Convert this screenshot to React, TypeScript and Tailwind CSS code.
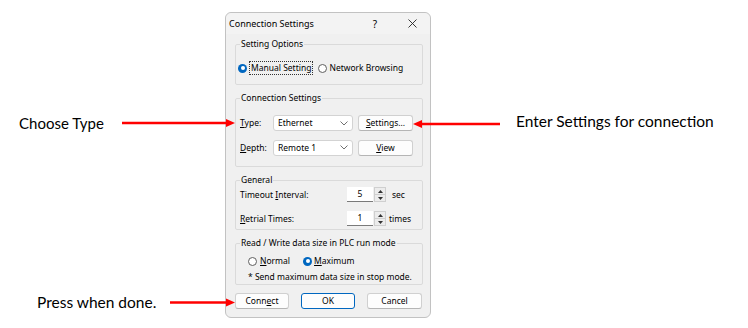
import React from "react";

const ui = "font-['Noto_Sans',sans-serif] text-[8.5px] leading-[12px] text-black";

function Radio({ on }: { on?: boolean }) {
  return on ? (
    <span className="w-[9px] h-[9px] rounded-full bg-[#0067c0] flex items-center justify-center shrink-0">
      <span className="w-[4px] h-[4px] rounded-full bg-white" />
    </span>
  ) : (
    <span className="block w-[9px] h-[9px] rounded-full border border-[#5f5f5f] bg-white shrink-0" />
  );
}

function Btn({ children, def, className = "" }: { children: React.ReactNode; def?: boolean; className?: string }) {
  return (
    <div
      className={`h-[16px] bg-[#fdfdfd] rounded-[3px] border flex items-center justify-center ${
        def ? "border-[#0067c0]" : "border-[#d0d0d0] border-b-[#b5b5b5]"
      } ${className}`}
    >
      {children}
    </div>
  );
}

function Select({ value }: { value: string }) {
  return (
    <div className="w-[80px] h-[16px] bg-white border border-[#d3d3d3] rounded-[3px] flex items-center justify-between pl-[4px] pr-[4px]">
      <span>{value}</span>
      <svg width="8" height="5" viewBox="0 0 8 5">
        <path d="M0.5 0.5 L4 4 L7.5 0.5" fill="none" stroke="#606060" strokeWidth="0.9" />
      </svg>
    </div>
  );
}

function Spin({ value }: { value: string }) {
  return (
    <div className="flex h-[15px]">
      <div className="w-[26px] bg-white border-b border-[#7a7a7a] flex items-center justify-center">{value}</div>
      <div className="w-[12px] ml-[1px] flex flex-col border border-[#cfcfcf] bg-[#ececec]">
        <div className="flex-1 flex items-center justify-center border-b border-[#cfcfcf]">
          <svg width="5" height="3" viewBox="0 0 5 3">
            <path d="M0 3 L2.5 0 L5 3 Z" fill="#333" />
          </svg>
        </div>
        <div className="flex-1 flex items-center justify-center">
          <svg width="5" height="3" viewBox="0 0 5 3">
            <path d="M0 0 L2.5 3 L5 0 Z" fill="#333" />
          </svg>
        </div>
      </div>
    </div>
  );
}

function Group({ title, className, children }: { title: string; className: string; children: React.ReactNode }) {
  return (
    <fieldset className={`border border-[#dadada] rounded-[2px] px-[4px] ${className}`}>
      <legend className="px-[1px] leading-[12px]">{title}</legend>
      {children}
    </fieldset>
  );
}

export default function App() {
  return (
    <div className="relative w-[748px] h-[328px] bg-white overflow-hidden">
      {/* Dialog */}
      <div className={`${ui} ml-[225px] mt-[12px] w-[206px] h-[306px] bg-[#f0f0f0] border border-[#c2c2c2] rounded-[6px] flex flex-col`}>
        <div className="h-[21px] flex items-center pl-[3px] bg-[#f3f3f3] rounded-t-[6px] text-[9px]">
          <span>Connection Settings</span>
          <span className="ml-auto w-[20px] text-center text-[10px]">?</span>
          <span className="ml-[20px] mr-[11px] w-[14px] flex justify-center">
            <svg width="9" height="9" viewBox="0 0 9 9">
              <path d="M0.5 0.5 L8.5 8.5 M8.5 0.5 L0.5 8.5" stroke="#222" strokeWidth="0.9" />
            </svg>
          </span>
        </div>

        <div className="pl-[9px] pr-[7px] pt-[4px] flex flex-col">
          <Group title="Setting Options" className="h-[47px]">
            <div className="mt-[12px] flex items-center h-[12px] -ml-[2px]">
              <Radio on />
              <span className="ml-[2px] px-[1px] border border-dotted border-[#333]">Manual Setting</span>
              <span className="ml-[5px]"><Radio /></span>
              <span className="ml-[2px]">Network Browsing</span>
            </div>
          </Group>

          <Group title="Connection Settings" className="h-[75px] mt-[7px]">
            <div className="mt-[11px] flex items-center">
              <span className="w-[33px]"><u>T</u>ype:</span>
              <Select value="Ethernet" />
              <Btn className="w-[55px] ml-[5px]"><span><u>S</u>ettings...</span></Btn>
            </div>
            <div className="mt-[8px] flex items-center">
              <span className="w-[33px]"><u>D</u>epth:</span>
              <Select value="Remote 1" />
              <Btn className="w-[55px] ml-[5px] mt-[1px]"><span><u>V</u>iew</span></Btn>
            </div>
          </Group>

          <Group title="General" className="h-[56px] mt-[7px]">
            <div className="mt-[1px] flex items-center">
              <span className="w-[107px]">Timeout <u>I</u>nterval:</span>
              <Spin value="5" />
              <span className="ml-[6px]">sec</span>
            </div>
            <div className="mt-[9px] flex items-center">
              <span className="w-[107px]"><u>R</u>etrial Times:</span>
              <Spin value="1" />
              <span className="ml-[3px]">times</span>
            </div>
          </Group>

          <Group title="Read / Write data size in PLC run mode" className="h-[48px] mt-[7px]">
            <div className="mt-[6px] flex items-center h-[12px] pl-[8px]">
              <Radio />
              <span className="ml-[3px]"><u>N</u>ormal</span>
              <span className="ml-[13px]"><Radio on /></span>
              <span className="ml-[2px]"><u>M</u>aximum</span>
            </div>
            <div className="mt-[4px] pl-[8px] whitespace-nowrap">* Send maximum data size in stop mode.</div>
          </Group>

          <div className="mt-[8px] flex gap-[12px]">
            <Btn className="w-[54px]"><span>Conn<u>e</u>ct</span></Btn>
            <Btn def className="w-[54px]">OK</Btn>
            <Btn className="w-[55px]">Cancel</Btn>
          </div>
        </div>
      </div>

      {/* Annotations */}
      <div className="absolute left-[19px] top-[114px] font-['Lato',sans-serif] text-[15px] leading-[18px] text-black">Choose Type</div>
      <div className="absolute left-[516px] top-[112px] font-['Lato',sans-serif] text-[15.5px] leading-[18px] text-black">Enter Settings for connection</div>
      <div className="absolute left-[37px] top-[293px] font-['Lato',sans-serif] text-[15.5px] leading-[18px] text-black">Press when done.</div>

      <svg className="absolute left-0 top-0 pointer-events-none" width="748" height="328">
        <line x1="122" y1="123" x2="227" y2="123" stroke="#ff0000" strokeWidth="2.5" />
        <polygon points="226,119 235,123 226,127" fill="#ff0000" />
        <line x1="421" y1="124" x2="500" y2="124" stroke="#ff0000" strokeWidth="2.5" />
        <polygon points="422,120 413,124 422,128" fill="#ff0000" />
        <line x1="170" y1="302.5" x2="227" y2="302.5" stroke="#ff0000" strokeWidth="2.5" />
        <polygon points="226,298.5 235,302.5 226,306.5" fill="#ff0000" />
      </svg>
    </div>
  );
}
